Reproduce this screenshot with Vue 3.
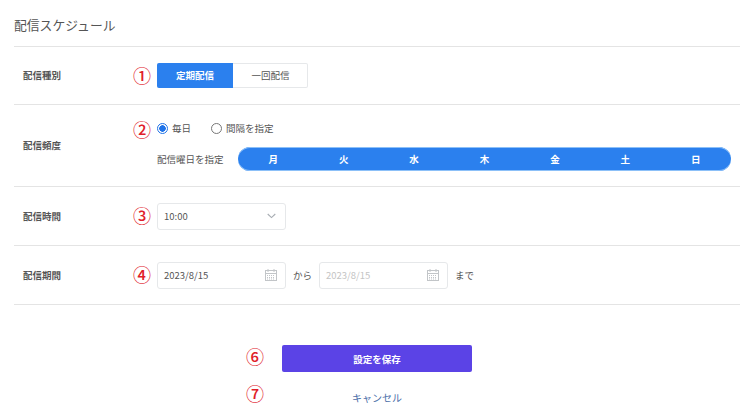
<script setup>
const days = ['月', '火', '水', '木', '金', '土', '日']
</script>

<template>
  <div class="page">
    <h1 class="title">配信スケジュール</h1>
    <section class="row row-type">
      <div class="label">配信種別</div>
      <div class="body">
        <span class="mark">①</span>
        <div class="toggle">
          <span class="tg on">定期配信</span>
          <span class="tg">一回配信</span>
        </div>
      </div>
    </section>
    <section class="row row-freq">
      <div class="label">配信頻度</div>
      <div class="body stack">
        <span class="mark">②</span>
        <div class="radios">
          <span class="radio"><i class="dot checked"></i>毎日</span>
          <span class="radio"><i class="dot"></i>間隔を指定</span>
        </div>
        <div class="daysline">
          <span class="small">配信曜日を指定</span>
          <div class="days"><span v-for="d in days" :key="d" class="day">{{ d }}</span></div>
        </div>
      </div>
    </section>
    <section class="row row-time">
      <div class="label">配信時間</div>
      <div class="body">
        <span class="mark">③</span>
        <div class="field">
          <span>10:00</span>
          <svg class="chev" width="9" height="6" viewBox="0 0 9 6"><path d="M.7 1l3.8 3.6L8.3 1" fill="none" stroke="#a8adb3" stroke-width="1.1"/></svg>
        </div>
      </div>
    </section>
    <section class="row row-date">
      <div class="label">配信期間</div>
      <div class="body">
        <span class="mark">④</span>
        <div class="field">
          <span>2023/8/15</span>
          <svg class="cal" width="12" height="12" viewBox="0 0 12 12"><g fill="none" stroke="#c2c5c8"><rect x=".5" y="1.5" width="11" height="10"/><path d="M.5 4.5h11M3 0v3M9 0v3"/></g><path d="M2 6.5h8M2 8.5h8M2 10h8" stroke="#c2c5c8" stroke-dasharray="1 1"/></svg>
        </div>
        <span class="sep">から</span>
        <div class="field muted">
          <span>2023/8/15</span>
          <svg class="cal" width="12" height="12" viewBox="0 0 12 12"><g fill="none" stroke="#c2c5c8"><rect x=".5" y="1.5" width="11" height="10"/><path d="M.5 4.5h11M3 0v3M9 0v3"/></g><path d="M2 6.5h8M2 8.5h8M2 10h8" stroke="#c2c5c8" stroke-dasharray="1 1"/></svg>
        </div>
        <span class="sep">まで</span>
      </div>
    </section>
    <div class="actions">
      <div class="act">
        <span class="mark big m6">⑥</span>
        <button class="save" type="button">設定を保存</button>
      </div>
      <div class="act">
        <span class="mark big m7">⑦</span>
        <a class="cancel">キャンセル</a>
      </div>
    </div>
  </div>
</template>

<style scoped>
.page {
  width: 753px;
  height: 411px;
  overflow: hidden;
  background: #fff;
  box-sizing: border-box;
  padding: 0 13px 0 14px;
  font-family: "Noto Sans CJK JP", "Noto Sans", sans-serif;
  color: #555;
  font-size: 9.5px;
}
.title {
  margin: 0;
  height: 46px;
  padding-top: 15px;
  box-sizing: border-box;
  font-size: 12.8px;
  line-height: 19px;
  font-weight: 400;
  color: #555;
}
.row {
  display: flex;
  align-items: center;
  border-top: 1px solid #e4e4e4;
  box-sizing: border-box;
}
.row-type { height: 58px; }
.row-freq { height: 82px; }
.row-time { height: 59px; }
.row-date { border-bottom: 1px solid #e4e4e4; height: 60px; }
.label {
  width: 143px;
  padding-left: 9px;
  box-sizing: border-box;
  font-weight: 700;
  color: #555;
  font-size: 9.5px;
  margin-top: -1px;
}
.body {
  position: relative;
  display: flex;
  align-items: center;
  flex: 1;
}
.stack { flex-direction: column; align-items: stretch; }
.mark {
  position: absolute;
  left: -24px;
  top: 50%;
  transform: translateY(-50%);
  font-size: 18px;
  line-height: 20px;
  font-weight: 500;
  color: #e0202a;
  margin-top: -1px;
}
.stack > .mark { top: 10px; }
.toggle {
  display: flex;
  width: 151px;
  height: 25px;
  border-radius: 2px;
  box-shadow: 0 0 0 1px #e6e8ea inset;
  overflow: hidden;
}
.tg {
  flex: 1;
  text-align: center;
  line-height: 25px;
  color: #555;
}
.tg.on {
  flex: 0 0 76px;
  background: #2b80ee;
  color: #fff;
  font-weight: 700;
}
.radios {
  display: flex;
  gap: 20px;
  height: 20px;
  align-items: center;
  margin-top: -2px;
  margin-bottom: 9px;
}
.radio { display: flex; align-items: center; gap: 4px; }
.dot {
  width: 11px;
  height: 11px;
  box-sizing: border-box;
  border: 1px solid #777;
  border-radius: 50%;
  background: #fff;
}
.dot.checked {
  border-color: #1f73e8;
  background: radial-gradient(circle, #1f73e8 0 3px, #fff 3.5px);
}
.daysline { display: flex; align-items: center; gap: 14px; }
.small { width: 67px; white-space: nowrap; }
.days {
  width: 493px;
  height: 24px;
  background: #2b80ee;
  border-radius: 12px;
  display: flex;
  box-shadow: inset 0 1px #8cc0f8, inset 0 -1px #8cc0f8;
}
.day {
  flex: 1;
  text-align: center;
  line-height: 24px;
  color: #fff;
  font-weight: 700;
}
.field {
  width: 129px;
  height: 27px;
  box-sizing: border-box;
  border: 1px solid #e6e8ea;
  border-radius: 3px;
  display: flex;
  align-items: center;
  justify-content: space-between;
  padding: 0 8px 0 6px;
  color: #555;
}
.field.muted { color: #c4c4c4; }
.chev { margin-right: 1px; }
.sep { margin: 0 7px; width: 19px; white-space: nowrap; }
.actions {
  display: flex;
  flex-direction: column;
  align-items: center;
  padding-top: 40px;
}
.act {
  position: relative;
  width: 190px;
  display: flex;
  justify-content: center;
}
.big { left: -36px; }
.m6 { top: 12px; }
.m7 { top: 22px; }
.save {
  width: 190px;
  height: 27px;
  border: 0;
  padding: 0;
  border-radius: 2px;
  background: #5b43e6;
  color: #fff;
  font: 700 9.5px "Noto Sans CJK JP", sans-serif;
}
.cancel {
  margin-top: 18px;
  line-height: 15px;
  color: #4a6ea8;
  font-size: 10px;
}
</style>
